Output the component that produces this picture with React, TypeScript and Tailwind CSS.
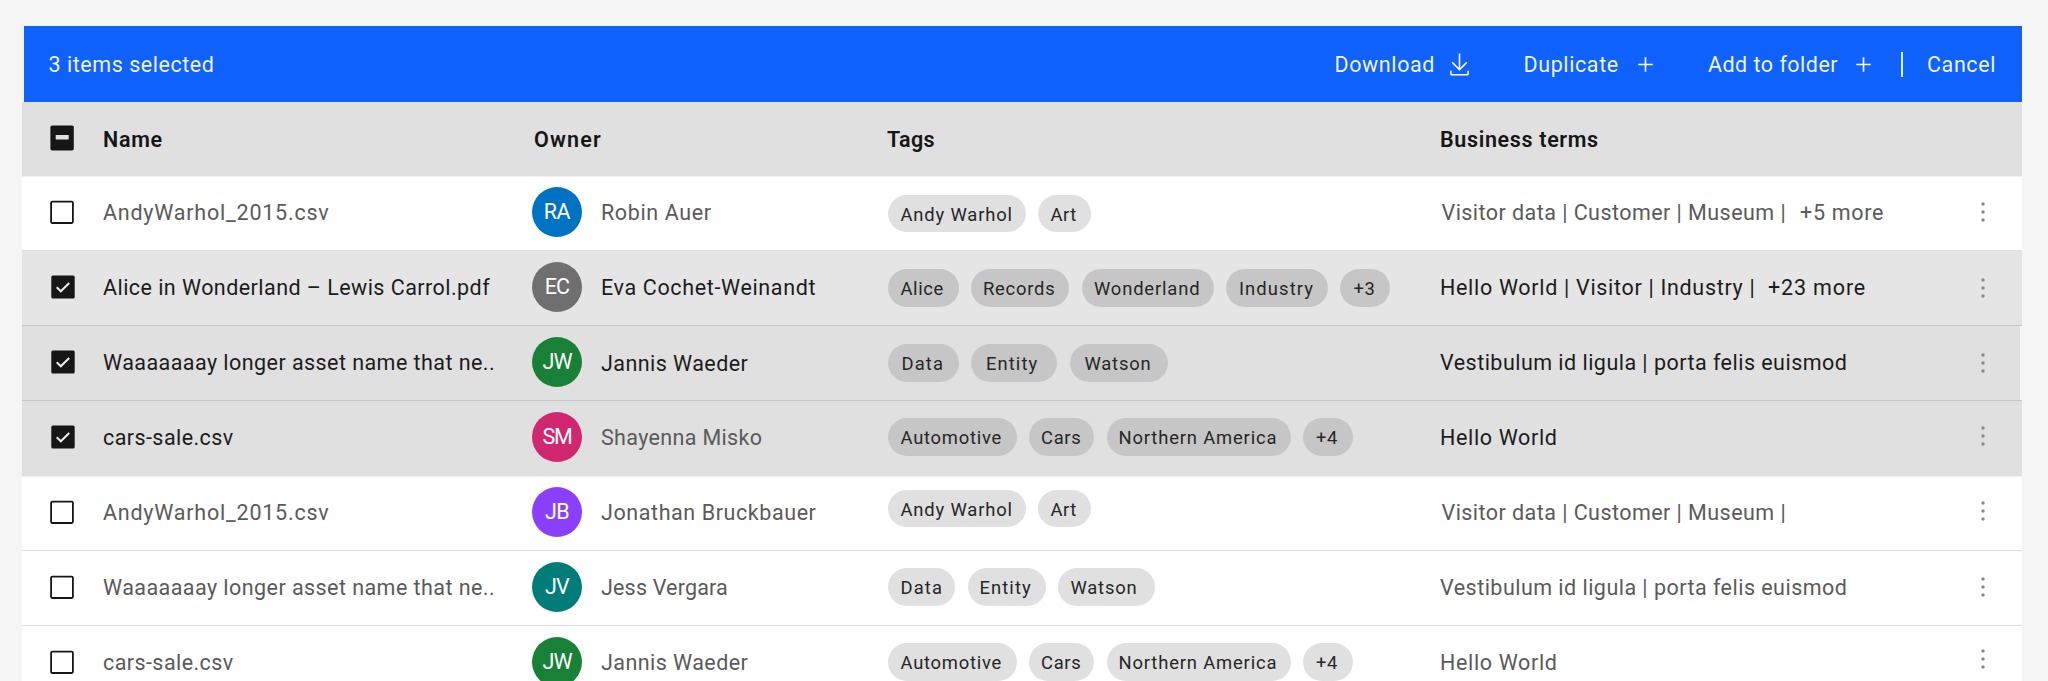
type Tag = { label: string; box: string };

type Row = {
  name: string;
  nameClass: string;
  initials: string;
  avatarClass: string;
  owner: string;
  ownerClass: string;
  tags: Tag[];
  terms: string;
  termsClass: string;
  more?: string;
  moreClass?: string;
  checked?: boolean;
  rowClass: string;
  textClass: string;
  tagClass: string;
  tagsOffset: string;
  dotsOffset: string;
};

const BODY = "text-[#5a5a5a]";
const STRONG = "text-[#1c1c1c]";
const TAG_LIGHT = "bg-[#e0e0e0]";
const TAG_DARK = "bg-[#c6c6c6]";

const andyTags: Tag[] = [
  { label: "Andy Warhol", box: "w-[137.5px] pl-[12.5px] tracking-[0.84px]" },
  { label: "Art", box: "w-[53px] pl-[12.5px] tracking-[0.5px]" },
];

const carTags: Tag[] = [
  { label: "Automotive", box: "w-[128.5px] pl-[12.5px] tracking-[0.75px]" },
  { label: "Cars", box: "w-[65px] pl-[12px] tracking-[0.7px]" },
  { label: "Northern America", box: "w-[184px] pl-[12px] tracking-[0.84px]" },
  { label: "+4", box: "w-[50px] pl-[13px] tracking-[0.6px]" },
];

const rows: Row[] = [
  {
    name: "AndyWarhol_2015.csv",
    nameClass: "tracking-[0.78px]",
    initials: "RA",
    avatarClass: "bg-[#0072c3] tracking-[-0.3px]",
    owner: "Robin Auer",
    ownerClass: "tracking-[0.62px]",
    tags: andyTags,
    terms: "Visitor data | Customer | Museum |",
    termsClass: "ml-[1.5px] w-[358.5px] tracking-[0.45px]",
    more: "+5 more",
    moreClass: "tracking-[0.7px]",
    rowClass: "bg-white shadow-[inset_0_1px_0_#f0f0f0] border-b-[#e0e0e0]",
    textClass: BODY,
    tagClass: TAG_LIGHT,
    tagsOffset: "pt-[18.5px]",
    dotsOffset: "pt-[25px]",
  },
  {
    name: "Alice in Wonderland – Lewis Carrol.pdf",
    nameClass: "tracking-[0.45px]",
    initials: "EC",
    avatarClass: "bg-[#6f6f6f] tracking-[-0.8px]",
    owner: "Eva Cochet-Weinandt",
    ownerClass: "tracking-[0.64px]",
    tags: [
      { label: "Alice", box: "w-[70.5px] pl-[12.5px] tracking-[0.6px]" },
      { label: "Records", box: "w-[98px] pl-[12px] tracking-[0.75px]" },
      { label: "Wonderland", box: "w-[132px] pl-[12.5px] tracking-[0.83px]" },
      { label: "Industry", box: "w-[101.5px] pl-[13px] tracking-[1.1px]" },
      { label: "+3", box: "w-[50px] pl-[13.5px] tracking-[0.57px]" },
    ],
    terms: "Hello World | Visitor | Industry |",
    termsClass: "w-[328px] tracking-[0.69px]",
    more: "+23 more",
    moreClass: "tracking-[0.85px]",
    checked: true,
    rowClass: "bg-[#e5e5e5] border-b-[#c6c6c6]",
    textClass: STRONG,
    tagClass: TAG_DARK,
    tagsOffset: "pt-[18px]",
    dotsOffset: "pt-[25.5px]",
  },
  {
    name: "Waaaaaaay longer asset name that ne..",
    nameClass: "tracking-[0.44px]",
    initials: "JW",
    avatarClass: "bg-[#198038] tracking-[-0.9px]",
    owner: "Jannis Waeder",
    ownerClass: "tracking-[0.44px] pt-[2px]",
    tags: [
      { label: "Data", box: "w-[70.5px] pl-[13.5px] tracking-[1.1px]" },
      { label: "Entity", box: "w-[86px] pl-[15px] tracking-[1.08px]" },
      { label: "Watson", box: "w-[98.5px] pl-[15px] tracking-[0.8px]" },
    ],
    terms: "Vestibulum id ligula | porta felis euismod",
    termsClass: "tracking-[0.47px]",
    checked: true,
    rowClass: "bg-linear-to-l from-[#f5f5f5] from-[2px] to-[#e0e0e0] to-[2px] border-b-[#c6c6c6]",
    textClass: STRONG,
    tagClass: TAG_DARK,
    tagsOffset: "pt-[18px]",
    dotsOffset: "pt-[25.5px]",
  },
  {
    name: "cars-sale.csv",
    nameClass: "tracking-[0.42px]",
    initials: "SM",
    avatarClass: "bg-[#d12771] tracking-[-1.3px]",
    owner: "Shayenna Misko",
    ownerClass: "tracking-[0.34px] text-[#5a5a5a]",
    tags: carTags,
    terms: "Hello World",
    termsClass: "tracking-[0.65px]",
    checked: true,
    rowClass: "bg-[#e0e0e0] border-b-[#e0e0e0]",
    textClass: STRONG,
    tagClass: TAG_DARK,
    tagsOffset: "pt-[17px]",
    dotsOffset: "pt-[24px]",
  },
  {
    name: "AndyWarhol_2015.csv",
    nameClass: "tracking-[0.78px]",
    initials: "JB",
    avatarClass: "bg-[#8a3ffc] tracking-[-0.6px]",
    owner: "Jonathan Bruckbauer",
    ownerClass: "tracking-[0.58px]",
    tags: andyTags,
    terms: "Visitor data | Customer | Museum |",
    termsClass: "ml-[1.5px] tracking-[0.45px]",
    rowClass: "bg-white shadow-[inset_0_1px_0_#f0f0f0] border-b-[#e0e0e0]",
    textClass: BODY,
    tagClass: TAG_LIGHT,
    tagsOffset: "pt-[13.5px]",
    dotsOffset: "pt-[24px]",
  },
  {
    name: "Waaaaaaay longer asset name that ne..",
    nameClass: "tracking-[0.44px]",
    initials: "JV",
    avatarClass: "bg-[#007d79] tracking-[-0.8px]",
    owner: "Jess Vergara",
    ownerClass: "tracking-[0.18px]",
    tags: [
      { label: "Data", box: "w-[67px] pl-[12.5px] tracking-[1.1px]" },
      { label: "Entity", box: "w-[78px] pl-[12px] tracking-[1.08px]" },
      { label: "Watson", box: "w-[97px] pl-[12.5px] tracking-[0.8px]" },
    ],
    terms: "Vestibulum id ligula | porta felis euismod",
    termsClass: "tracking-[0.47px]",
    rowClass: "bg-white border-b-[#e0e0e0]",
    textClass: BODY,
    tagClass: TAG_LIGHT,
    tagsOffset: "pt-[17px]",
    dotsOffset: "pt-[25px]",
  },
  {
    name: "cars-sale.csv",
    nameClass: "tracking-[0.42px]",
    initials: "JW",
    avatarClass: "bg-[#198038] tracking-[-0.9px]",
    owner: "Jannis Waeder",
    ownerClass: "tracking-[0.44px]",
    tags: carTags,
    terms: "Hello World",
    termsClass: "tracking-[0.65px]",
    rowClass: "bg-white border-b-[#e0e0e0]",
    textClass: BODY,
    tagClass: TAG_LIGHT,
    tagsOffset: "pt-[17px]",
    dotsOffset: "pt-[22px]",
  },
];

const GRID = "grid grid-cols-[81px_429px_356px_552px_1fr_63px]";

function Checkbox({ checked }: { checked?: boolean }) {
  return (
    <svg viewBox="0 0 24 24" className="size-6" fill="none">
      {checked ? (
        <>
          <rect x="0.3" y="0.4" width="23.4" height="23.2" rx="1.5" fill="#161616" />
          <path d="M5.7 12.3 9.8 16.3 18.2 8" stroke="#ececec" strokeWidth="2" />
        </>
      ) : (
        <rect x="1.1" y="1.6" width="21.8" height="21.4" rx="1.2" fill="#fff" stroke="#161616" strokeWidth="1.8" />
      )}
    </svg>
  );
}

function Dots() {
  return (
    <svg viewBox="0 0 4 22" className="ml-[22px] h-[22px] w-1 fill-[#8a8a8a]">
      <circle cx="2" cy="3" r="1.7" />
      <circle cx="2" cy="11" r="1.7" />
      <circle cx="2" cy="19" r="1.7" />
    </svg>
  );
}

function Plus() {
  return (
    <svg viewBox="0 0 32 32" className="size-[29px] fill-white">
      <path d="M16.9 15.1V8h-1.8v7.1H8v1.8h7.1V24h1.8v-7.1H24v-1.8z" />
    </svg>
  );
}

function TableRow({ row }: { row: Row }) {
  return (
    <div className={`${GRID} h-[75px] shrink-0 border-b ${row.rowClass} ${row.textClass}`}>
      <div className={`pt-6 ${row.checked ? "pl-[29px]" : "pl-[28px]"}`}>
        <Checkbox checked={row.checked} />
      </div>
      <div className={`flex items-center whitespace-nowrap ${row.nameClass}`}>{row.name}</div>
      <div className="flex">
        <div className={`mt-[11px] flex size-[50px] shrink-0 items-center justify-center rounded-full text-white ${row.avatarClass}`}>
          {row.initials}
        </div>
        <div className={`ml-[19px] flex items-center whitespace-nowrap ${row.ownerClass}`}>{row.owner}</div>
      </div>
      <div className={`flex items-start gap-[12.5px] ${row.tagsOffset}`}>
        {row.tags.map((tag) => (
          <div
            key={tag.label}
            className={`flex h-[37.5px] shrink-0 items-center rounded-full pt-[3px] text-[18.4px] whitespace-nowrap text-[#262626] ${row.tagClass} ${tag.box}`}
          >
            {tag.label}
          </div>
        ))}
      </div>
      <div className="flex items-center whitespace-pre">
        <span className={`shrink-0 ${row.termsClass}`}>{row.terms}</span>
        {row.more && <span className={row.moreClass}>{row.more}</span>}
      </div>
      <div className={row.dotsOffset}>
        <Dots />
      </div>
    </div>
  );
}

export default function App() {
  return (
    <div className="flex h-[681px] w-[2048px] flex-col overflow-hidden bg-[#f5f5f5] pt-[26px] pr-[26px] pl-[22px] font-[Roboto,'Noto_Sans',sans-serif] text-[21.5px] leading-[26px]">
      <div className="ml-[1.5px] flex h-[76px] shrink-0 items-center bg-[#0f62fe] pl-[25px] whitespace-nowrap text-white/95">
        <span className="w-[1286px] pt-px tracking-[0.54px]">3 items selected</span>
        <div className="flex w-[189px] items-center">
          <span className="w-[112.5px] pt-px tracking-[0.6px]">Download</span>
          <svg viewBox="0 0 32 32" className="size-[25px] fill-white">
            <path d="M26 24v4H6v-4H4v4a2 2 0 0 0 2 2h20a2 2 0 0 0 2-2v-4zM26 14l-1.41-1.41L17 20.17V2h-2v18.17l-7.59-7.58L6 14l10 10z" />
          </svg>
        </div>
        <div className="flex w-[184.5px] items-center">
          <span className="w-[107px] pt-px tracking-[0.6px]">Duplicate</span>
          <Plus />
        </div>
        <div className="flex w-[192.5px] items-center">
          <span className="w-[141px] pt-px tracking-[0.48px]">Add to folder</span>
          <Plus />
        </div>
        <div className="h-[25px] w-[2px] bg-white/90" />
        <span className="ml-[24.5px] pt-px tracking-[0.6px]">Cancel</span>
      </div>
      <div className={`${GRID} h-[74px] shrink-0 bg-[#e0e0e0] pt-px font-semibold text-[#161616]`}>
        <div className="pt-[22px] pl-[28px]">
          <svg viewBox="0 0 24 26" className="h-[26px] w-6">
            <rect x="0.4" y="0.4" width="23.4" height="25.2" rx="1.8" fill="#161616" />
            <rect x="5.7" y="10" width="13" height="4.6" rx="0.6" fill="#e0e0e0" />
          </svg>
        </div>
        <div className="flex items-center tracking-[0.7px]">Name</div>
        <div className="flex items-center pl-[2px] tracking-[1.2px]">Owner</div>
        <div className="-ml-px flex items-center tracking-[0.3px]">Tags</div>
        <div className="flex items-center tracking-[0.66px]">Business terms</div>
      </div>
      {rows.map((row, i) => (
        <TableRow key={i} row={row} />
      ))}
    </div>
  );
}
